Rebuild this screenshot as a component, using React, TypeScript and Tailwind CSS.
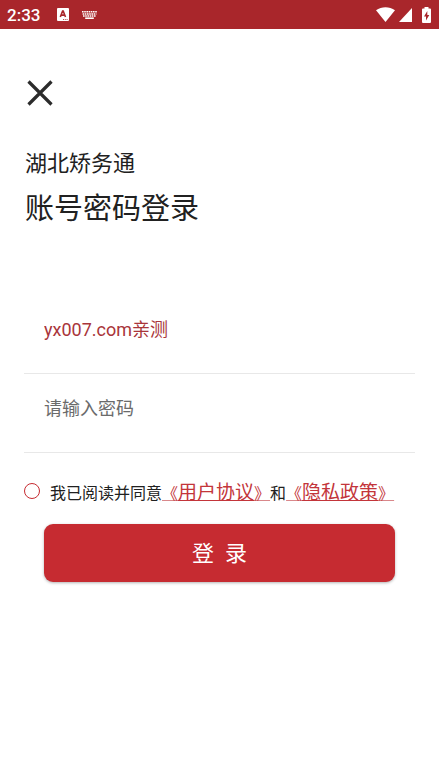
import { useState } from "react";

function StatusBar() {
  return (
    <header className="flex h-[29px] items-center bg-[#a9262b] pr-2 pl-[7px] text-white">
      <span className="w-[50px] text-[17px] leading-5 font-medium">2:33</span>
      <svg className="h-[13px] w-3" viewBox="0 0 12 13" aria-hidden="true">
        <rect x="0" y="0" width="12" height="13" rx="1" fill="#fff" />
        <path
          d="M3.300 9 5.600 3h.6l2.300 6M4.300 7.100h3.200"
          fill="none"
          stroke="#a9262b"
          strokeWidth="1.6"
        />
        <path d="M6 11.500h1M7.800 11.500h1M9.600 11.500h1" stroke="#a9262b" strokeWidth="0.8" />
      </svg>
      <svg className="ml-[13px] h-2 w-[15px]" viewBox="0 0 15 8" aria-hidden="true">
        <g stroke="#fff" fill="none">
          <path d="M0 .8h15" strokeWidth="1.500" strokeDasharray="1.600 .6" />
          <path d="M.6 2.900h13.800" strokeWidth="1.500" strokeDasharray="1.600 .6" />
          <path d="M1 5h13" strokeWidth="1.500" strokeDasharray="1.600 .6" />
          <path d="M3.200 7.200h8.600" strokeWidth="1.600" />
        </g>
      </svg>
      <div className="ml-auto flex items-center">
        <svg className="h-[15px] w-[19px]" viewBox="0 0 19 15" fill="#fff" aria-hidden="true">
          <path d="M9.500 15 0 3.200C5.600-.8 13.400-.8 19 3.200z" />
        </svg>
        <svg className="ml-1 h-[14px] w-[13px]" viewBox="0 0 13 14" fill="#fff" aria-hidden="true">
          <path d="M13 0v14H0z" />
        </svg>
        <svg className="ml-[10px] h-4 w-[9px]" viewBox="0 0 9 16" aria-hidden="true">
          <path
            d="M2.500 0h4v1.600H8q1 0 1 1V15q0 1-1 1H1q-1 0-1-1V2.600q0-1 1-1h1.500z"
            fill="#fff"
          />
          <path d="M5.300 4 2 9.500h2V13.500L7.300 8h-2z" fill="#a9262b" />
        </svg>
      </div>
    </header>
  );
}

function AgreementLink({ href, children }: { href: string; children: string }) {
  return (
    <a href={href} className="text-[#c3353a] underline decoration-[#d9888b]">
      《<span className="text-[19px] underline decoration-[#c3353a]">{children}</span>》
    </a>
  );
}

export default function App() {
  const [account, setAccount] = useState("yx007.com亲测");
  const [password, setPassword] = useState("");
  const [agreed, setAgreed] = useState(false);

  return (
    <div className="min-h-screen bg-white font-[Roboto,'Noto_Sans_CJK_SC',sans-serif] text-[#212121]">
      <StatusBar />
      <main className="px-6 pt-[50px]">
        <button type="button" aria-label="关闭" className="block">
          <svg
            className="size-8"
            viewBox="0 0 32 32"
            fill="none"
            stroke="#2b2b2b"
            strokeWidth="3.2"
            aria-hidden="true"
          >
            <path d="M4.500 2.500 27.500 25.500M27.500 2.500 4.500 25.500" />
          </svg>
        </button>

        <h1 className="mt-[37px] pl-px">
          <span className="block text-[22px] leading-8">湖北矫务通</span>
          <span className="mt-[9px] block text-[29px] leading-10">账号密码登录</span>
        </h1>

        <form onSubmit={(event) => event.preventDefault()}>
          <div className="mt-16 border-b border-[#e8e8e8]">
            <input
              type="text"
              aria-label="账号"
              value={account}
              onChange={(event) => setAccount(event.target.value)}
              className="block h-20 w-full px-5 pb-[10px] text-lg text-[#a9353a] outline-none"
            />
          </div>
          <div className="border-b border-[#e8e8e8]">
            <input
              type="password"
              aria-label="密码"
              placeholder="请输入密码"
              value={password}
              onChange={(event) => setPassword(event.target.value)}
              className="block h-[78px] w-full px-5 pb-[10px] text-lg outline-none placeholder:text-[#6b6b6b]"
            />
          </div>

          <div className="mt-[25px] flex items-start">
            <input
              id="agree"
              type="checkbox"
              checked={agreed}
              onChange={(event) => setAgreed(event.target.checked)}
              className="mt-[5px] size-4 shrink-0 appearance-none rounded-full border border-[#c62b31] checked:bg-[#c62b31]"
            />
            <div className="ml-[10px] pt-px text-base leading-7 whitespace-nowrap">
              <label htmlFor="agree">我已阅读并同意</label>
              <AgreementLink href="#terms">用户协议</AgreementLink>
              和
              <AgreementLink href="#privacy">隐私政策</AgreementLink>
            </div>
          </div>

          <div className="mt-4 px-5">
            <button
              type="submit"
              className="block h-[58px] w-full rounded-[9px] bg-[#c62b31] text-[22px] text-white shadow-[0_1px_3px_rgba(0,0,0,0.3)]"
            >
              登{"\u00a0\u00a0"}录
            </button>
          </div>
        </form>
      </main>
    </div>
  );
}
